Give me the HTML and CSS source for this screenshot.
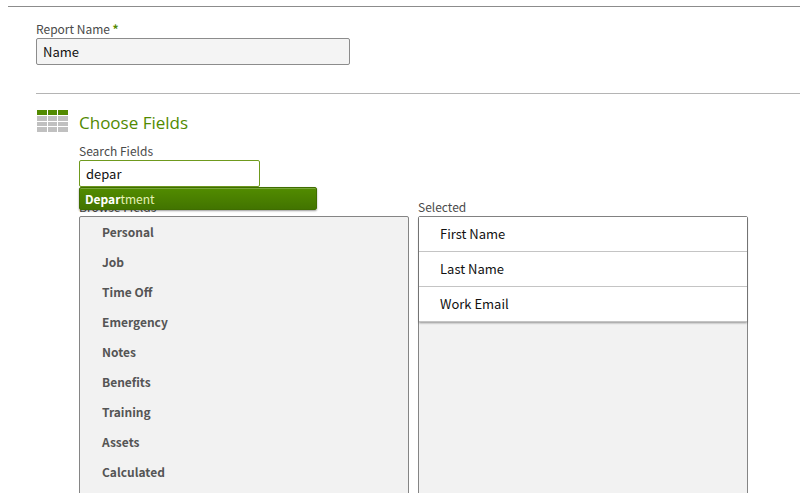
FILE: index.html
```
<!DOCTYPE html>
<html lang="en">
<head>
<meta charset="UTF-8">
<title>Report Fields</title>
<link rel="stylesheet" href="styles.css">
</head>

<body>

<form class="report">

<div class="name-section">
  <label for="reportName">Report Name <span class="required">*</span></label>
  <input id="reportName" class="name-input" type="text" value="Name">
</div>

<div class="fields-section">
  <svg class="table-icon" width="31" height="22" viewBox="0 0 31 22" aria-hidden="true">
    <path fill="#528a00" d="M0 0h10v5H0zM11 0h9v5h-9zM21 0h10v5H21z"/>
    <path fill="#c0c0c0" d="M0 6h10v5H0zM11 6h9v5h-9zM21 6h10v5H21zM0 12h10v4H0zM11 12h9v4h-9zM21 12h10v4H21zM0 17h10v5H0zM11 17h9v5h-9zM21 17h10v5H21z"/>
  </svg>

  <div class="fields">
    <h2>Choose Fields</h2>

    <div class="search">
      <label for="search">Search Fields</label>
      <input id="search" class="search-input" type="text" value="depar" autocomplete="off">
      <button type="button" class="suggestion"><b>Depar</b>tment</button>
    </div>

    <div class="columns">
      <div class="column">
        <div class="column-title">Browse Fields</div>
        <ul class="list browse">
          <li>Personal</li>
          <li>Job</li>
          <li>Time Off</li>
          <li>Emergency</li>
          <li>Notes</li>
          <li>Benefits</li>
          <li>Training</li>
          <li>Assets</li>
          <li>Calculated</li>
        </ul>
      </div>

      <div class="column">
        <div class="column-title">Selected</div>
        <div class="list">
          <ul class="selected">
            <li>First Name</li>
            <li>Last Name</li>
            <li>Work Email</li>
          </ul>
        </div>
      </div>
    </div>
  </div>
</div>

</form>

</body>
</html>
```
FILE: styles.css
```
*{
  box-sizing:border-box;
}

body{
  margin:0;
  height:100vh;
  overflow:hidden;
  background:#fff;
  color:#4a4a4a;
  font-family:"Noto Sans CJK SC","Open Sans",sans-serif;
  font-size:12px;
  line-height:18px;
}

.report{
  margin:6px 0 0 8px;
  padding:13px 0 0 28px;
  border-top:1px solid #8c8c8c;
}

label{
  display:block;
}

.required{
  color:#528a00;
  font-weight:bold;
}

input{
  display:block;
  height:27px;
  padding:0 6px;
  border:1px solid #8c8c8c;
  border-radius:2px;
  color:#111;
  font:inherit;
  font-size:13px;
  outline:none;
}

.name-section{
  padding-bottom:28px;
  border-bottom:1px solid #b4b4b4;
}

.name-input{
  width:314px;
  max-width:100%;
  background:#f4f4f4;
}

.fields-section{
  display:flex;
  gap:11px;
  padding:16px 52px 0 1px;
}

.table-icon{
  flex:none;
}

.fields{
  flex:1;
}

h2{
  margin:0 0 6px;
  color:#528a00;
  font-family:"Open Sans",sans-serif;
  font-size:17px;
  font-weight:400;
  line-height:26px;
}

.search{
  position:relative;
  margin-bottom:11px;
}

.search-input{
  width:181px;
  border-color:#6f9a1e;
  background:#fff;
}

/* lies over the column titles */
.suggestion{
  position:absolute;
  top:100%;
  left:0;
  width:238px;
  height:23px;
  padding:0 5px;
  border:1px solid #3f6d00;
  border-radius:2px;
  background:linear-gradient(#528c00,#427400);
  box-shadow:inset 0 1px 0 #79a63a,0 1px 2px rgba(0,0,0,0.4);
  color:#e6f2b8;
  font:inherit;
  text-align:left;
}

.suggestion b{
  color:#fff;
}

.columns{
  display:grid;
  grid-template-columns:1fr 1fr;
  gap:9px;
}

ul{
  margin:0;
  padding:0;
  list-style:none;
}

.list{
  min-height:320px;
  border:1px solid #858585;
  border-radius:2px;
  background:#f2f2f2;
}

.browse li{
  padding:0 22px;
  color:#555;
  font-weight:bold;
  line-height:30px;
}

.selected{
  background:#fff;
  box-shadow:0 1px 2px rgba(0,0,0,0.4);
}

.selected li{
  padding:0 21px;
  border-bottom:1px solid #c4c4c4;
  color:#111;
  font-size:13px;
  line-height:34px;
}
```
